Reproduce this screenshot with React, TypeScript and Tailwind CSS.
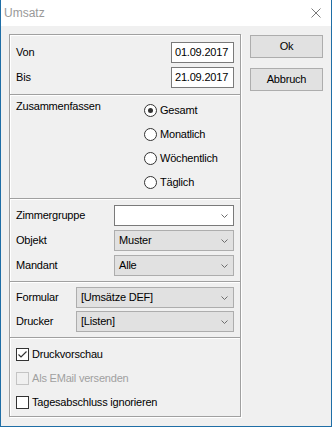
import React from "react";

function Chevron() {
  return (
    <svg width="7" height="4" viewBox="0 0 7 4" className="mr-[5px] shrink-0">
      <path d="M0.5 0.5 L3.5 3.5 L6.5 0.5" fill="none" stroke="#6d6d6d" strokeWidth="1" />
    </svg>
  );
}

function Combo({ value, white, width }: { value: string; white?: boolean; width: string }) {
  return (
    <div
      className={`${width} h-[21px] flex items-center justify-between border ${
        white ? "bg-white border-[#7a7a7a]" : "bg-[#e1e1e1] border-[#adadad]"
      }`}
    >
      <span className="pl-[4px]">{value}</span>
      <Chevron />
    </div>
  );
}

function Radio({ label, checked }: { label: string; checked?: boolean }) {
  return (
    <div className="h-[24px] flex items-center gap-[3px]">
      <span className="w-[13px] h-[13px] rounded-full border border-[#333] bg-white flex items-center justify-center">
        {checked && <span className="w-[5px] h-[5px] rounded-full bg-[#333]" />}
      </span>
      <span>{label}</span>
    </div>
  );
}

function Check({ label, checked, disabled }: { label: string; checked?: boolean; disabled?: boolean }) {
  return (
    <div className="h-[24px] flex items-center gap-[3px]">
      <span
        className={`w-[13px] h-[13px] border flex items-center justify-center ${
          disabled ? "border-[#c4c4c4] bg-[#f0f0f0]" : "border-[#333] bg-white"
        }`}
      >
        {checked && (
          <svg width="11" height="11" viewBox="0 0 11 11">
            <path d="M1.5 5.5 L4 8 L9.5 2.5" fill="none" stroke="#333" strokeWidth="1.2" />
          </svg>
        )}
      </span>
      <span className={disabled ? "text-[#a0a0a0]" : ""}>{label}</span>
    </div>
  );
}

const sep = "border-b border-[#a0a0a0] shadow-[0_1px_0_white]";

export default function App() {
  return (
    <div className="w-[332px] h-[427px] flex flex-col border-x border-b border-[#1f6ea6] bg-[#f0f0f0] font-['Liberation_Sans',Arial,sans-serif] text-[11px] tracking-[-0.2px] text-black leading-[13px]">
      {/* title bar */}
      <div className="h-[26px] shrink-0 bg-white flex items-center justify-between pl-[3px] pr-[10px]">
        <span className="text-[12px] tracking-normal text-[#999]">Umsatz</span>
        <svg width="10" height="10" viewBox="0 0 10 10">
          <path d="M0.5 0.5 L9.5 9.5 M9.5 0.5 L0.5 9.5" stroke="#7a7a7a" strokeWidth="1" />
        </svg>
      </div>

      <div className="flex-1 flex pt-[8px] pl-[8px] pr-[8px] gap-[9px]">
        {/* main group */}
        <div className="w-[232px] h-[383px] border border-[#a0a0a0] shadow-[1px_1px_0_white,inset_1px_1px_0_white] flex flex-col">
          <div className={`h-[60px] pt-[7px] px-[6px] flex flex-col gap-[4px] ${sep}`}>
            <div className="h-[21px] flex items-center justify-between">
              <span>Von</span>
              <div className="w-[63px] h-[21px] bg-white border border-[#7a7a7a] flex items-center pl-[3px]">01.09.2017</div>
            </div>
            <div className="h-[21px] flex items-center justify-between">
              <span>Bis</span>
              <div className="w-[63px] h-[21px] bg-white border border-[#7a7a7a] flex items-center pl-[3px]">21.09.2017</div>
            </div>
          </div>

          <div className={`h-[104px] pt-[3px] pl-[6px] flex ${sep}`}>
            <div className="w-[128px] mt-[1px] leading-[14px]">Zusammenfassen</div>
            <div className="flex flex-col">
              <Radio label="Gesamt" checked />
              <Radio label="Monatlich" />
              <Radio label="Wöchentlich" />
              <Radio label="Täglich" />
            </div>
          </div>

          <div className={`h-[83px] pt-[6px] px-[6px] flex flex-col gap-[4px] ${sep}`}>
            <div className="h-[21px] flex items-center justify-between">
              <span>Zimmergruppe</span>
              <Combo value="" white width="w-[120px]" />
            </div>
            <div className="h-[21px] flex items-center justify-between">
              <span>Objekt</span>
              <Combo value="Muster" width="w-[120px]" />
            </div>
            <div className="h-[21px] flex items-center justify-between">
              <span>Mandant</span>
              <Combo value="Alle" width="w-[120px]" />
            </div>
          </div>

          <div className={`h-[56px] pt-[5px] px-[6px] flex flex-col gap-[3px] ${sep}`}>
            <div className="h-[21px] flex items-center justify-between">
              <span>Formular</span>
              <Combo value="[Umsätze DEF]" width="w-[158px]" />
            </div>
            <div className="h-[21px] flex items-center justify-between">
              <span>Drucker</span>
              <Combo value="[Listen]" width="w-[158px]" />
            </div>
          </div>

          <div className="flex-1 pt-[4px] px-[6px] flex flex-col">
            <Check label="Druckvorschau" checked />
            <Check label="Als EMail versenden" disabled />
            <Check label="Tagesabschluss ignorieren" />
          </div>
        </div>

        {/* buttons */}
        <div className="flex flex-col gap-[10px] pt-[1px]">
          <button className="w-[73px] h-[23px] bg-[#e1e1e1] border border-[#adadad] flex items-center justify-center">
            Ok
          </button>
          <button className="w-[73px] h-[23px] bg-[#e1e1e1] border border-[#adadad] flex items-center justify-center">
            Abbruch
          </button>
        </div>
      </div>
    </div>
  );
}
